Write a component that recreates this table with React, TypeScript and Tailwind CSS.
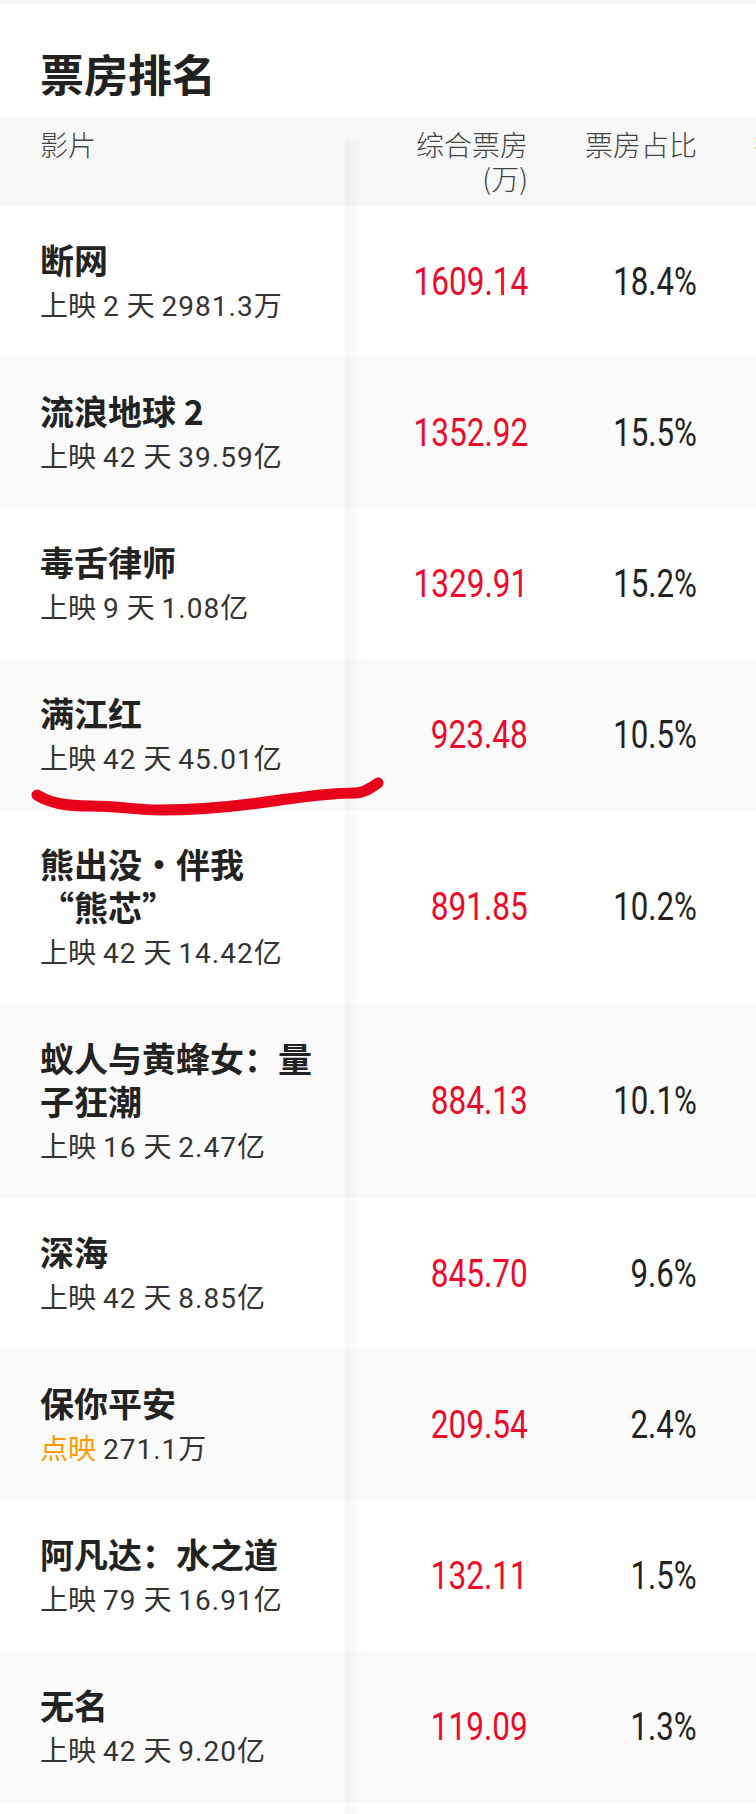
import React from "react";

type Row = {
  title: string[];
  days?: string;
  pre?: boolean;
  total: string;
  unit: string;
  box: string;
  pct: string;
};

const rows: Row[] = [
  { title: ["断网"], days: "2", total: "2981.3", unit: "万", box: "1609.14", pct: "18.4%" },
  { title: ["流浪地球 2"], days: "42", total: "39.59", unit: "亿", box: "1352.92", pct: "15.5%" },
  { title: ["毒舌律师"], days: "9", total: "1.08", unit: "亿", box: "1329.91", pct: "15.2%" },
  { title: ["满江红"], days: "42", total: "45.01", unit: "亿", box: "923.48", pct: "10.5%" },
  { title: ["熊出没·伴我", "“熊芯”"], days: "42", total: "14.42", unit: "亿", box: "891.85", pct: "10.2%" },
  { title: ["蚁人与黄蜂女：量", "子狂潮"], days: "16", total: "2.47", unit: "亿", box: "884.13", pct: "10.1%" },
  { title: ["深海"], days: "42", total: "8.85", unit: "亿", box: "845.70", pct: "9.6%" },
  { title: ["保你平安"], pre: true, total: "271.1", unit: "万", box: "209.54", pct: "2.4%" },
  { title: ["阿凡达：水之道"], days: "79", total: "16.91", unit: "亿", box: "132.11", pct: "1.5%" },
  { title: ["无名"], days: "42", total: "9.20", unit: "亿", box: "119.09", pct: "1.3%" },
];

export default function App() {
  return (
    <div className="relative w-[756px] min-h-[1814px] overflow-hidden bg-white font-['Roboto','Noto_Sans_CJK_SC',sans-serif]">
      <div className="h-[4px] bg-[#f4f4f4]" />
      <div className="pl-[40px] pt-[41px] pb-[17px] text-[44px] leading-[56px] font-bold text-[#222] font-['Noto_Sans_CJK_SC',sans-serif]">
        票房排名
      </div>

      {/* header */}
      <div className="flex h-[88px] bg-[#f7f7f7] text-[28px] leading-[34px] font-light text-[#444] font-['Noto_Sans_CJK_SC',sans-serif]">
        <div className="w-[345px] shrink-0 pl-[40px] pt-[9px]">影片</div>
        <div className="w-[203px] shrink-0 pr-[20px] pt-[9px] text-right">
          <div>综合票房</div>
          <div>(万)</div>
        </div>
        <div className="w-[169px] shrink-0 pr-[20px] pt-[9px] text-right">票房占比</div>
        <div className="w-[200px] shrink-0 pl-[37px] pt-[9px] whitespace-nowrap">排片场次</div>
      </div>

      {/* rows */}
      {rows.map((r, i) => (
        <div key={i} className={`flex ${i % 2 === 1 ? "bg-[#fafafa]" : "bg-white"}`}>
          <div className="w-[345px] shrink-0 pl-[40px] pt-[32px] pb-[30px]">
            <div className="text-[34px] leading-[43px] font-bold text-[#222] whitespace-nowrap font-['Noto_Sans_CJK_SC',sans-serif]">
              {r.title.map((t, j) => (
                <div key={j}>{t}</div>
              ))}
            </div>
            <div className="mt-[6px] text-[28px] leading-[40px] text-[#333] whitespace-nowrap">
              {r.pre ? (
                <>
                  <span className="text-[#ff9a00]">点映</span>{" "}
                  <span className="tracking-[1px]">{r.total}</span>
                  {r.unit}
                </>
              ) : (
                <>
                  上映 <span className="tracking-[1px]">{r.days}</span> 天{" "}
                  <span className="tracking-[1px]">{r.total}</span>
                  {r.unit}
                </>
              )}
            </div>
          </div>
          <div className="w-[203px] shrink-0 pr-[20px] flex items-center justify-end">
            <span className="inline-block origin-right scale-x-[0.83] text-[38px] leading-[44px] text-[#ec0a2a] font-['Roboto',sans-serif]">
              {r.box}
            </span>
          </div>
          <div className="w-[169px] shrink-0 pr-[20px] flex items-center justify-end">
            <span className="inline-block origin-right scale-x-[0.82] text-[38px] leading-[44px] text-[#222] font-['Roboto',sans-serif]">
              {r.pct}
            </span>
          </div>
          <div className="w-[200px] shrink-0" />
        </div>
      ))}

      {/* sticky column shadow */}
      <div className="pointer-events-none absolute left-[345px] top-[140px] bottom-0 w-[18px] bg-gradient-to-r from-[rgba(0,0,0,0.035)] to-transparent" />

      {/* hand-drawn red underline */}
      <svg
        className="pointer-events-none absolute left-0 top-0"
        width="756"
        height="1814"
        viewBox="0 0 756 1814"
      >
        <path
          d="M 37 795 C 50 803, 65 806, 90 806 C 120 806, 135 810, 160 810 C 200 810, 240 806, 280 800 C 310 796, 330 793, 355 793 C 365 793, 372 787, 378 783"
          fill="none"
          stroke="#e8001a"
          strokeWidth="11"
          strokeLinecap="round"
          strokeLinejoin="round"
        />
      </svg>
    </div>
  );
}
